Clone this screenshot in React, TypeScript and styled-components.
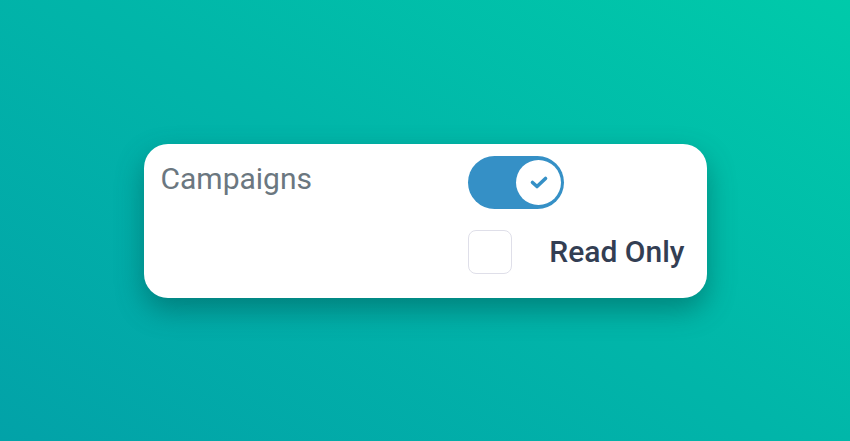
import React, { useState } from "react";
import styled, { createGlobalStyle } from "styled-components";

const GlobalStyle = createGlobalStyle`
  * {
    box-sizing: border-box;
  }
  body {
    margin: 0;
    font-family: Roboto, "Liberation Sans", sans-serif;
  }
`;

const Page = styled.div`
  min-height: 100vh;
  display: flex;
  justify-content: center;
  align-items: center;
  background: linear-gradient(32deg, #02a2a8 0%, #01b5a9 50%, #00caaa 100%);
`;

const Card = styled.div`
  width: 563px;
  display: flex;
  padding: 12px 22px 24px 17px;
  background: #ffffff;
  border-radius: 24px;
  box-shadow: 0 12px 28px rgba(0, 70, 70, 0.45);
`;

const Label = styled.div`
  flex: 1;
  padding-top: 5px;
  font-size: 30px;
  line-height: 36px;
  color: #6b7780;
`;

const Controls = styled.div`
  display: flex;
  flex-direction: column;
  align-items: flex-start;
  gap: 21px;
`;

const Track = styled.button<{ $on: boolean }>`
  width: 96px;
  height: 53px;
  padding: 4px 3px;
  border: none;
  border-radius: 27px;
  display: flex;
  justify-content: ${(p) => (p.$on ? "flex-end" : "flex-start")};
  background: ${(p) => (p.$on ? "#3590c6" : "#c9d2da")};
  cursor: pointer;
`;

const Knob = styled.span`
  width: 45px;
  height: 45px;
  border-radius: 50%;
  background: #ffffff;
  display: flex;
  align-items: center;
  justify-content: center;
  color: #3590c6;
`;

const Row = styled.label`
  display: flex;
  align-items: center;
  gap: 37px;
  cursor: pointer;
`;

const Box = styled.span<{ $checked: boolean }>`
  width: 44px;
  height: 44px;
  border-radius: 8px;
  border: 1.5px solid #dfdfe9;
  background: ${(p) => (p.$checked ? "#3590c6" : "#ffffff")};
`;

const RowText = styled.span`
  font-size: 30px;
  font-weight: 500;
  line-height: 36px;
  color: #333e53;
`;

function App() {
  const [on, setOn] = useState(true);
  const [readOnly, setReadOnly] = useState(false);

  return (
    <Page>
      <GlobalStyle />
      <Card>
        <Label>Campaigns</Label>
        <Controls>
          <Track $on={on} onClick={() => setOn(!on)} aria-pressed={on}>
            <Knob>
              {on && (
                <svg width="24" height="24" viewBox="0 0 24 24" fill="none">
                  <polyline
                    points="5.5 12.5 10 16.5 18.5 8.5"
                    stroke="currentColor"
                    strokeWidth="3.6"
                    strokeLinecap="round"
                    strokeLinejoin="round"
                  />
                </svg>
              )}
            </Knob>
          </Track>
          <Row onClick={() => setReadOnly(!readOnly)}>
            <Box $checked={readOnly} />
            <RowText>Read Only</RowText>
          </Row>
        </Controls>
      </Card>
    </Page>
  );
}

export default App;
